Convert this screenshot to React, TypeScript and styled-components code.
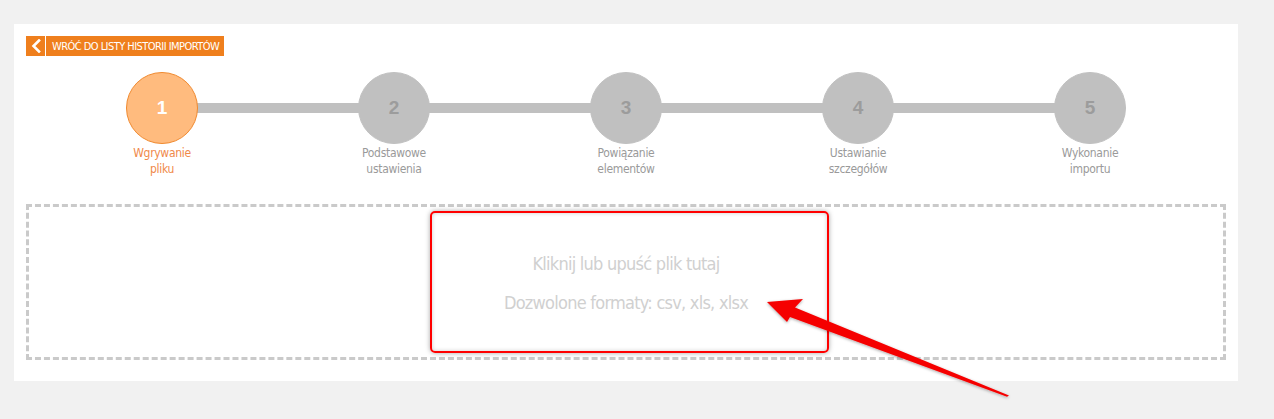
import React from 'react';
import styled, { createGlobalStyle } from 'styled-components';

const GlobalStyle = createGlobalStyle`
    html, body {
        margin: 0;
        padding: 0;
        background: #f1f1f1;
    }
`;

const FONT = `"DejaVu Sans Condensed", "Liberation Sans", sans-serif`;

const Page = styled.div`
    position: relative;
    padding: 24px 36px 38px 14px;
    width: 1274px;
    height: 419px;
    box-sizing: border-box;
    font-family: ${FONT};
`;

const Panel = styled.div`
    background: #fff;
    width: 1224px;
    height: 357px;
    box-sizing: border-box;
    padding: 12px 12px 0 12px;
`;

const BackButton = styled.a`
    display: inline-flex;
    align-items: stretch;
    height: 20px;
    background: #ef7f1d;
    color: #fff;
    text-decoration: none;
    cursor: pointer;
`;

const BackIcon = styled.span`
    width: 19px;
    border-right: 1px solid #fff;
    display: flex;
    align-items: center;
    justify-content: center;
`;

const BackLabel = styled.span`
    display: flex;
    align-items: center;
    padding: 0 5px 0 6px;
    font-size: 11px;
    letter-spacing: -0.55px;
    text-transform: uppercase;
`;

const Stepper = styled.div`
    position: relative;
    display: grid;
    grid-template-columns: repeat(5, 232px);
    margin: 15px 20px 0 20px;

    &::before {
        content: '';
        position: absolute;
        left: 116px;
        right: 116px;
        top: 31px;
        height: 10px;
        background: #c0c0c0;
    }
`;

const Step = styled.div`
    position: relative;
    display: flex;
    flex-direction: column;
    align-items: center;
`;

const Circle = styled.div<{ $active?: boolean }>`
    width: 72px;
    height: 72px;
    box-sizing: border-box;
    border-radius: 50%;
    display: flex;
    align-items: center;
    justify-content: center;
    font-family: "Liberation Sans", sans-serif;
    font-weight: bold;
    font-size: 19px;
    background: ${p => (p.$active ? '#ffbb7e' : '#c0c0c0')};
    border: 1px solid ${p => (p.$active ? '#f0892e' : '#c0c0c0')};
    color: ${p => (p.$active ? '#fff' : '#9c9c9c')};
`;

const StepLabel = styled.div<{ $active?: boolean }>`
    margin-top: 1px;
    text-align: center;
    font-size: 12px;
    letter-spacing: -0.3px;
    line-height: 16px;
    color: ${p => (p.$active ? '#f0894a' : '#9a9a9a')};
`;

const DropZone = styled.div`
    margin-top: 27px;
    height: 156px;
    box-sizing: border-box;
    border: 3px dashed #cacaca;
    display: flex;
    flex-direction: column;
    align-items: center;
    justify-content: center;
    gap: 16px;
    color: #d0d0d0;
    font-size: 18px;
    letter-spacing: -0.75px;
    line-height: 23px;
    padding-top: 2px;
`;

const Highlight = styled.div`
    position: absolute;
    left: 430px;
    top: 211px;
    width: 399px;
    height: 142px;
    box-sizing: border-box;
    border: 2px solid #f00;
    border-radius: 5px;
    box-shadow: 0 0 5px rgba(0, 0, 0, 0.35), inset 0 0 4px rgba(0, 0, 0, 0.2);
    pointer-events: none;
`;

const Overlay = styled.svg`
    position: absolute;
    left: 0;
    top: 0;
    pointer-events: none;
    overflow: visible;
`;

const steps = [
    ['Wgrywanie', 'pliku'],
    ['Podstawowe', 'ustawienia'],
    ['Powiązanie', 'elementów'],
    ['Ustawianie', 'szczegółów'],
    ['Wykonanie', 'importu'],
];

export default function App()
{
    return (
        <Page>
            <GlobalStyle />
            <Panel>
                <BackButton>
                    <BackIcon>
                        <svg width="10" height="14" viewBox="0 0 10 14">
                            <path d="M8 1.5 L2.5 7 L8 12.5" fill="none" stroke="#fff" strokeWidth="2.6" strokeLinecap="square" />
                        </svg>
                    </BackIcon>
                    <BackLabel>Wróć do listy historii importów</BackLabel>
                </BackButton>

                <Stepper>
                    {steps.map((lines, i) => (
                        <Step key={i}>
                            <Circle $active={i === 0}>{i + 1}</Circle>
                            <StepLabel $active={i === 0}>
                                {lines[0]}
                                <br />
                                {lines[1]}
                            </StepLabel>
                        </Step>
                    ))}
                </Stepper>

                <DropZone>
                    <div>Kliknij lub upuść plik tutaj</div>
                    <div>Dozwolone formaty: csv, xls, xlsx</div>
                </DropZone>
            </Panel>

            <Highlight />
            <Overlay width="1274" height="419">
                <defs>
                    <filter id="shadow" x="-10%" y="-10%" width="120%" height="130%">
                        <feDropShadow dx="0" dy="1" stdDeviation="1.5" floodColor="#000" floodOpacity="0.35" />
                    </filter>
                </defs>
                <polygon
                    points="767,302 803,299 795,307.5 1009,395.5 1007,396.8 790,317 787,322"
                    fill="#f50000"
                    filter="url(#shadow)"
                />
            </Overlay>
        </Page>
    );
}
